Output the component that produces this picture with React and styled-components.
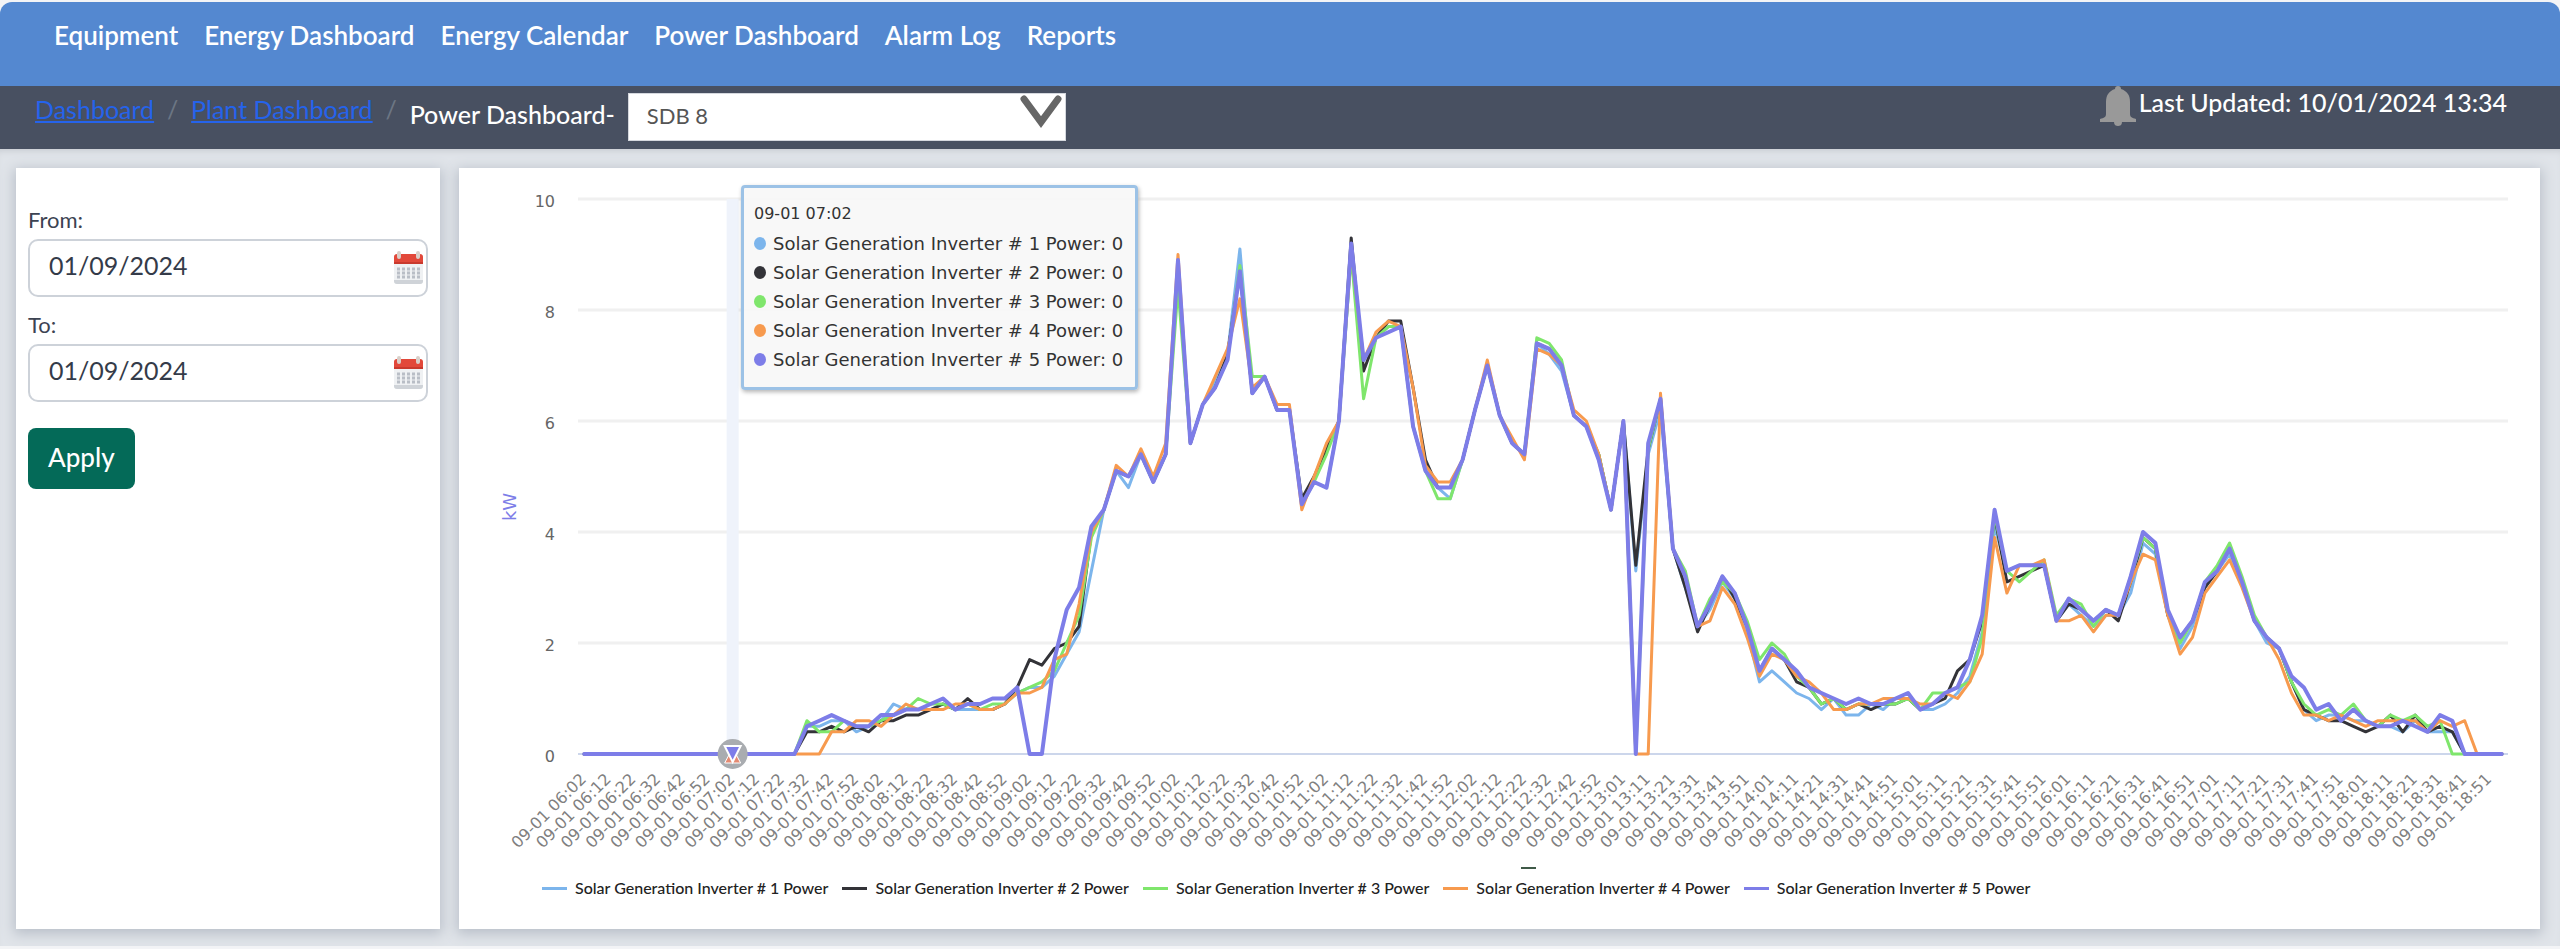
import styled, { createGlobalStyle } from 'styled-components';

const GlobalStyle = createGlobalStyle`
  *, *::before, *::after {
    box-sizing: border-box;
  }

  body {
    margin: 0;
    background-color: #f3f4f6;
    font-family: Lato, 'Liberation Sans', sans-serif;
    color: #3c4352;
  }
`;

const Page = styled.div`
  display: flex;
  flex-direction: column;
  min-height: 100vh;
  padding: 2px 0 3px;
`;

const TopNav = styled.nav`
  display: flex;
  gap: 26px;
  height: 84px;
  padding: 15px 54px;
  background-color: #5488d0;
  border-radius: 12px 12px 0 0;
`;

const TopNavLink = styled.a`
  color: #ffffff;
  font-size: 26px;
  font-weight: 600;
  line-height: 36px;
  text-decoration: none;
  white-space: nowrap;
`;

const SubBar = styled.div`
  display: flex;
  justify-content: space-between;
  height: 63px;
  padding: 0 53px 0 35px;
  background-color: #485061;
`;

const Breadcrumb = styled.div`
  display: flex;
  align-items: center;
  padding-bottom: 3px;
  font-size: 25px;
  white-space: nowrap;
`;

const CrumbLink = styled.a`
  padding-bottom: 14px;
  color: #2563eb;
`;

const CrumbDivider = styled.span`
  width: 37px;
  padding-bottom: 14px;
  color: #6c7684;
  text-align: center;
`;

const CrumbLabel = styled.label`
  margin-right: 13px;
  padding-bottom: 4px;
  color: #ffffff;
  font-weight: 500;
`;

const SelectWrapper = styled.div`
  position: relative;
  margin-top: 1px;
`;

const SourceSelect = styled.select`
  width: 438px;
  height: 48px;
  padding: 0 18px 2px;
  border: 1px solid #d5d8de;
  border-radius: 0;
  background-color: #ffffff;
  color: #555555;
  font-family: inherit;
  font-size: 22px;
  appearance: none;
`;

const SelectArrow = styled.svg`
  position: absolute;
  top: 2px;
  right: 2px;
  width: 44px;
  height: 34px;
  pointer-events: none;
`;

const Updated = styled.div`
  display: flex;
  align-items: flex-start;
  gap: 3px;
  color: #ffffff;
  font-size: 25px;
  font-weight: 500;
  line-height: 32px;
  white-space: nowrap;
`;

const BellIcon = styled.svg`
  width: 36px;
  height: 40px;
`;

const Content = styled.main`
  display: flex;
  flex: 1;
  gap: 19px;
  padding: 19px 20px 17px 16px;
  background-color: #e0e4e9;
  box-shadow: inset 0 6px 6px -4px #c8ccd2;
`;

const Card = styled.section`
  background-color: #ffffff;
  box-shadow: 0 3px 12px 2px #b9bfc9;
`;

const FilterCard = styled(Card)`
  flex: 0 0 424px;
  padding: 37px 12px;
`;

const ChartCard = styled(Card)`
  position: relative;
  flex: 1;
  min-width: 0;
`;

const Field = styled.div`
  display: flex;
  flex-direction: column;
  margin-bottom: 13px;
`;

const FieldLabel = styled.label`
  margin-bottom: 4px;
  font-size: 22px;
  line-height: 30px;
`;

const DateBox = styled.div`
  display: flex;
  align-items: center;
  height: 58px;
  padding: 0 2px 0 19px;
  border: 2px solid #cdd2d9;
  border-radius: 10px;
`;

const DateInput = styled.input`
  flex: 1;
  min-width: 0;
  padding: 0 0 6px;
  border: none;
  outline: none;
  background: transparent;
  color: #343b49;
  font-family: inherit;
  font-size: 25px;
`;

const CalendarButton = styled.button`
  display: flex;
  padding: 0;
  border: none;
  background: none;
  cursor: pointer;
`;

const ApplyButton = styled.button`
  height: 61px;
  margin-top: 13px;
  padding: 0 20px 4px;
  border: none;
  border-radius: 8px;
  background-color: #046a58;
  color: #ffffff;
  font-family: inherit;
  font-size: 26px;
  font-weight: 500;
  cursor: pointer;
`;

const ChartSvg = styled.svg`
  display: block;
  width: 100%;
  height: auto;
  font-family: 'DejaVu Sans', sans-serif;
`;

const Legend = styled.ul`
  display: flex;
  flex-wrap: wrap;
  gap: 14px;
  margin: 0;
  padding: 0 0 0 83px;
  list-style: none;
`;

const LegendItem = styled.li`
  display: flex;
  align-items: center;
  gap: 8px;
  color: #222222;
  font-size: 16px;
  font-weight: 500;
  line-height: 20px;
`;

const LegendLine = styled.span`
  width: 25px;
  height: 3px;
  background-color: ${({ $color }) => $color};
`;

const Tooltip = styled.div`
  position: absolute;
  top: 17px;
  left: 282px;
  padding: 13px 12px 13px 10px;
  border: 3px solid #9cc2e6;
  border-radius: 4px;
  background-color: rgba(247, 247, 247, 0.92);
  box-shadow: 1px 2px 4px #b5b5b5;
  color: #333333;
  font-family: 'DejaVu Sans', sans-serif;
  font-size: 18px;
  line-height: 29px;
  white-space: nowrap;
`;

const TooltipTitle = styled.div`
  margin-bottom: 2px;
  font-size: 16px;
  line-height: 26px;
`;

const TooltipRow = styled.div`
  display: flex;
  align-items: center;
  gap: 7px;
`;

const TooltipDot = styled.span`
  width: 12px;
  height: 13px;
  border-radius: 50%;
  background-color: ${({ $color }) => $color};
`;

const NAV_ITEMS = [
  'Equipment',
  'Energy Dashboard',
  'Energy Calendar',
  'Power Dashboard',
  'Alarm Log',
  'Reports',
];

const NIGHT = Array(18).fill(0);

const SERIES = [
  {
    name: 'Solar Generation Inverter # 1 Power',
    color: '#7cb5ec',
    data: [
      ...NIGHT, 0.5, 0.5, 0.6, 0.6, 0.4, 0.5, 0.6, 0.9, 0.8, 0.8, 0.8, 0.9,
      0.8, 0.8, 0.8, 0.8, 0.9, 1.1, 1.2, 1.2, 1.4, 1.8, 2.2, 3.3, 4.4, 5.1, 4.8, 5.4,
      4.9, 5.4, 8.8, 5.6, 6.3, 6.7, 7.2, 9.1, 6.5, 6.8, 6.2, 6.2, 4.5, 4.9, 4.8, 6.0,
      9.0, 7.1, 7.5, 7.7, 7.7, 5.9, 5.1, 4.8, 4.6, 5.3, 6.2, 7.0, 6.1, 5.6, 5.4, 7.4,
      7.2, 6.9, 6.1, 5.9, 5.3, 4.4, 6.0, 3.3, 5.4, 6.2, 3.7, 3.0, 2.3, 2.6, 3.1, 2.8,
      2.2, 1.3, 1.5, 1.3, 1.1, 1.0, 0.8, 1.0, 0.7, 0.7, 0.9, 0.8, 1.0, 1.0, 0.8, 0.8,
      0.9, 1.1, 1.4, 2.2, 4.1, 3.3, 3.4, 3.4, 3.4, 2.4, 2.7, 2.5, 2.3, 2.5, 2.5, 2.9,
      3.8, 3.6, 2.5, 1.9, 2.3, 3.0, 3.3, 3.6, 3.1, 2.4, 2.0, 1.9, 1.3, 0.8, 0.6, 0.7,
      0.7, 0.6, 0.6, 0.5, 0.5, 0.4, 0.6, 0.4, 0.4, 0.4, 0, 0, 0, 0,
    ],
  },
  {
    name: 'Solar Generation Inverter # 2 Power',
    color: '#333338',
    data: [
      ...NIGHT, 0.4, 0.4, 0.5, 0.4, 0.5, 0.4, 0.6, 0.6, 0.7, 0.7, 0.8, 0.9,
      0.8, 1.0, 0.8, 0.8, 0.9, 1.2, 1.7, 1.6, 1.9, 2.0, 2.3, 4.0, 4.4, 5.1, 5.0, 5.4,
      4.9, 5.4, 8.8, 5.6, 6.3, 6.6, 7.2, 8.7, 6.5, 6.8, 6.2, 6.2, 4.6, 5.0, 5.5, 6.0,
      9.3, 6.9, 7.5, 7.8, 7.8, 6.6, 5.3, 4.8, 4.8, 5.3, 6.2, 7.0, 6.1, 5.6, 5.4, 7.4,
      7.3, 7.0, 6.1, 5.9, 5.4, 4.4, 6.0, 3.4, 5.5, 6.4, 3.7, 3.0, 2.2, 2.7, 3.2, 2.8,
      2.3, 1.5, 1.9, 1.7, 1.3, 1.2, 0.9, 1.0, 0.8, 0.9, 0.8, 0.9, 0.9, 1.0, 0.8, 0.9,
      1.0, 1.5, 1.7, 2.4, 4.3, 3.1, 3.2, 3.3, 3.4, 2.4, 2.7, 2.6, 2.4, 2.6, 2.4, 3.1,
      3.9, 3.7, 2.5, 2.1, 2.4, 3.0, 3.3, 3.7, 3.1, 2.4, 2.1, 1.9, 1.3, 0.8, 0.7, 0.6,
      0.6, 0.5, 0.4, 0.5, 0.7, 0.4, 0.7, 0.4, 0.5, 0.4, 0, 0, 0, 0,
    ],
  },
  {
    name: 'Solar Generation Inverter # 3 Power',
    color: '#7fe66c',
    data: [
      ...NIGHT, 0.6, 0.4, 0.4, 0.6, 0.5, 0.5, 0.6, 0.7, 0.8, 1.0, 0.9, 0.9,
      0.8, 0.9, 0.8, 0.9, 0.9, 1.1, 1.2, 1.3, 1.5, 2.0, 2.5, 3.9, 4.4, 5.1, 5.0, 5.4,
      4.9, 5.4, 8.4, 5.6, 6.3, 6.6, 7.1, 8.8, 6.8, 6.8, 6.2, 6.2, 4.5, 4.9, 5.4, 6.0,
      9.0, 6.4, 7.5, 7.7, 7.7, 5.9, 5.1, 4.6, 4.6, 5.3, 6.2, 7.0, 6.1, 5.6, 5.4, 7.5,
      7.4, 7.1, 6.1, 5.9, 5.4, 4.4, 6.0, 0, 5.5, 6.4, 3.7, 3.3, 2.3, 2.8, 3.1, 2.9,
      2.4, 1.7, 2.0, 1.8, 1.4, 1.2, 0.9, 1.0, 0.8, 0.9, 0.9, 0.9, 0.9, 1.0, 0.8, 1.1,
      1.1, 1.2, 1.3, 2.1, 4.3, 3.3, 3.1, 3.3, 3.5, 2.5, 2.8, 2.7, 2.3, 2.6, 2.5, 3.2,
      3.9, 3.7, 2.6, 2.0, 2.4, 3.1, 3.4, 3.8, 3.2, 2.5, 2.1, 1.9, 1.3, 0.9, 0.7, 0.8,
      0.7, 0.9, 0.6, 0.5, 0.7, 0.6, 0.7, 0.5, 0.6, 0, 0, 0, 0, 0,
    ],
  },
  {
    name: 'Solar Generation Inverter # 4 Power',
    color: '#f79a4e',
    data: [
      ...NIGHT, 0, 0, 0.4, 0.4, 0.6, 0.6, 0.5, 0.7, 0.9, 0.8, 0.8, 0.8,
      0.9, 0.9, 0.8, 0.8, 0.9, 1.1, 1.1, 1.2, 1.7, 1.8, 2.7, 4.0, 4.4, 5.2, 5.0, 5.5,
      5.0, 5.6, 9.0, 5.6, 6.3, 6.8, 7.3, 8.2, 6.6, 6.8, 6.3, 6.3, 4.4, 5.0, 5.6, 6.0,
      9.1, 7.1, 7.6, 7.8, 7.7, 6.6, 5.2, 4.9, 4.9, 5.3, 6.2, 7.1, 6.1, 5.7, 5.3, 7.3,
      7.2, 7.0, 6.2, 6.0, 5.4, 4.4, 6.0, 0, 0, 6.5, 3.7, 3.2, 2.3, 2.4, 3.0, 2.7,
      2.1, 1.4, 1.8, 1.7, 1.4, 1.3, 1.1, 0.8, 0.8, 0.9, 0.9, 1.0, 1.0, 1.0, 0.9, 0.9,
      1.1, 1.0, 1.3, 1.8, 3.9, 2.9, 3.4, 3.4, 3.5, 2.4, 2.4, 2.5, 2.2, 2.5, 2.5, 3.1,
      3.6, 3.5, 2.5, 1.8, 2.1, 2.9, 3.2, 3.5, 3.0, 2.4, 2.1, 1.7, 1.1, 0.7, 0.7, 0.6,
      0.7, 0.6, 0.5, 0.6, 0.6, 0.6, 0.6, 0.4, 0.6, 0.5, 0.6, 0, 0, 0,
    ],
  },
  {
    name: 'Solar Generation Inverter # 5 Power',
    color: '#7d7de8',
    data: [
      ...NIGHT, 0.5, 0.6, 0.7, 0.6, 0.5, 0.5, 0.7, 0.7, 0.8, 0.8, 0.9, 1.0,
      0.8, 0.9, 0.9, 1.0, 1.0, 1.2, 0, 0, 1.7, 2.6, 3.0, 4.1, 4.4, 5.1, 5.0, 5.4,
      4.9, 5.4, 8.9, 5.6, 6.3, 6.6, 7.1, 8.7, 6.5, 6.8, 6.2, 6.2, 4.5, 4.9, 4.8, 6.0,
      9.2, 7.1, 7.5, 7.6, 7.7, 5.9, 5.1, 4.8, 4.8, 5.3, 6.2, 7.0, 6.1, 5.6, 5.4, 7.4,
      7.3, 7.0, 6.1, 5.9, 5.3, 4.4, 6.0, 0, 5.6, 6.4, 3.7, 3.2, 2.3, 2.7, 3.2, 2.9,
      2.3, 1.5, 1.9, 1.7, 1.5, 1.2, 1.1, 1.0, 0.9, 1.0, 0.9, 0.9, 1.0, 1.1, 0.8, 0.9,
      1.1, 1.2, 1.7, 2.5, 4.4, 3.3, 3.4, 3.4, 3.4, 2.4, 2.8, 2.6, 2.4, 2.6, 2.5, 3.2,
      4.0, 3.8, 2.6, 2.1, 2.4, 3.1, 3.3, 3.7, 3.1, 2.4, 2.1, 1.9, 1.4, 1.2, 0.8, 0.9,
      0.6, 0.8, 0.6, 0.5, 0.5, 0.6, 0.5, 0.4, 0.7, 0.6, 0, 0, 0, 0,
    ],
  },
];

const POINTS = 156;
const HOVERED = 12;
const CHART = { width: 2081, height: 710, left: 119, right: 2049, top: 31, bottom: 586 };
const STEP = (CHART.right - CHART.left) / POINTS;

const xAt = (index) => CHART.left + (index + 0.5) * STEP;
const yAt = (value) => CHART.bottom - (value / 10) * (CHART.bottom - CHART.top);

function timeLabels() {
  const labels = [];
  for (let i = 0; i < POINTS / 2; i += 1) {
    const minutes = 362 + i * 10 - (i >= 42 ? 1 : 0);
    const hh = String(Math.floor(minutes / 60)).padStart(2, '0');
    const mm = String(minutes % 60).padStart(2, '0');
    labels.push(`09-01 ${hh}:${mm}`);
  }
  return labels;
}

function toPoints(data) {
  return data.map((value, i) => `${xAt(i).toFixed(1)},${yAt(value).toFixed(1)}`).join(' ');
}

function HoverMarker() {
  const x = xAt(HOVERED);
  const y = yAt(0);
  return (
    <g transform={`translate(${x} ${y})`}>
      <circle r="15" fill="#a9acb0" />
      <path d="M-8 9 L0 -6 L8 9 Z" fill="#e58a72" stroke="#ffffff" strokeWidth="1" />
      <path d="M-8 -8 H8 L0 8 Z" fill="#7d7de8" stroke="#ffffff" strokeWidth="2" />
    </g>
  );
}

function PowerChart() {
  return (
    <ChartSvg viewBox={`0 0 ${CHART.width} ${CHART.height}`} role="img" aria-label="Inverter power in kW">
      {[2, 4, 6, 8, 10].map((tick) => (
        <path key={tick} d={`M${CHART.left} ${yAt(tick)}H${CHART.right}`} stroke="#f0f0f0" strokeWidth="3" />
      ))}
      <rect x={xAt(HOVERED) - 6} y={CHART.top} width="12" height={CHART.bottom - CHART.top} fill="#eff3fb" />
      <path d={`M${CHART.left} ${CHART.bottom}H${CHART.right}`} stroke="#ccd6eb" strokeWidth="2" />
      {[0, 2, 4, 6, 8, 10].map((tick) => (
        <text key={tick} x="96" y={yAt(tick) + 8} textAnchor="end" fontSize="16" fill="#666666">
          {tick}
        </text>
      ))}
      <text transform="translate(57 339) rotate(-90)" textAnchor="middle" fontSize="18" fill="#7d7de8">
        kW
      </text>
      {SERIES.map((series, i) => (
        <polyline
          key={series.name}
          points={toPoints(series.data)}
          fill="none"
          stroke={series.color}
          strokeWidth={i === 4 ? 4 : 3}
          strokeLinejoin="round"
          strokeLinecap="round"
        />
      ))}
      <HoverMarker />
      {timeLabels().map((label, i) => (
        <text
          key={label}
          transform={`translate(${xAt(i * 2) + 3} ${CHART.bottom + 26}) rotate(-45)`}
          textAnchor="end"
          fontSize="16"
          fill="#808080"
        >
          {label}
        </text>
      ))}
      <path d="M1062 700h15" stroke="#3f5a48" strokeWidth="2" />
    </ChartSvg>
  );
}

function ChartTooltip() {
  return (
    <Tooltip role="tooltip">
      <TooltipTitle>09-01 07:02</TooltipTitle>
      {SERIES.map((series) => (
        <TooltipRow key={series.name}>
          <TooltipDot $color={series.color} />
          {`${series.name}: 0`}
        </TooltipRow>
      ))}
    </Tooltip>
  );
}

function CalendarIcon() {
  return (
    <svg width="31" height="34" viewBox="0 0 31 34" aria-hidden="true">
      <rect x="1" y="3" width="29" height="30" rx="3" fill="#eff1f3" />
      <path d="M1 30v-1h29v1a3 3 0 0 1-3 3H4a3 3 0 0 1-3-3z" fill="#cfd3d8" />
      <path d="M1 13V6a3 3 0 0 1 3-3h23a3 3 0 0 1 3 3v7z" fill="#e2483a" />
      <path d="M1 11h29v2H1z" fill="#c93a2e" />
      <path
        d="M4 18h23M4 22h23M4 26h23"
        stroke="#b9bec6"
        strokeWidth="3"
        strokeDasharray="3 2"
      />
      <path d="M6 2v4M25 2v4" stroke="#d9cfc9" strokeWidth="4" strokeLinecap="round" />
    </svg>
  );
}

function DateField({ id, label }) {
  return (
    <Field>
      <FieldLabel htmlFor={id}>{label}</FieldLabel>
      <DateBox>
        <DateInput id={id} type="text" defaultValue="01/09/2024" />
        <CalendarButton type="button" aria-label={`Pick date, ${label}`}>
          <CalendarIcon />
        </CalendarButton>
      </DateBox>
    </Field>
  );
}

function SubHeader() {
  return (
    <SubBar>
      <Breadcrumb>
        <CrumbLink href="#dashboard">Dashboard</CrumbLink>
        <CrumbDivider>/</CrumbDivider>
        <CrumbLink href="#plant">Plant Dashboard</CrumbLink>
        <CrumbDivider>/</CrumbDivider>
        <CrumbLabel htmlFor="source">Power Dashboard-</CrumbLabel>
        <SelectWrapper>
          <SourceSelect id="source" defaultValue="SDB 8">
            <option>SDB 8</option>
          </SourceSelect>
          <SelectArrow viewBox="0 0 44 34" aria-hidden="true">
            <path
              d="M4 4 L21 27 L38 4"
              fill="none"
              stroke="#666666"
              strokeWidth="7"
              strokeLinecap="round"
            />
          </SelectArrow>
        </SelectWrapper>
      </Breadcrumb>
      <Updated>
        <BellIcon viewBox="0 0 36 40" aria-hidden="true">
          <path
            d="M18 0c2 0 3 1 3 3 6 2 9 6 9 13v12c0 3 2 4 6 5v3H22c0 3-2 4-4 4s-4-1-4-4H0v-3c4-1 6-2 6-5V16C6 9 9 5 15 3c0-2 1-3 3-3z"
            fill="#999999"
          />
        </BellIcon>
        Last Updated: 10/01/2024 13:34
      </Updated>
    </SubBar>
  );
}

function App() {
  return (
    <Page>
      <GlobalStyle />
      <TopNav>
        {NAV_ITEMS.map((item) => (
          <TopNavLink key={item} href="#">
            {item}
          </TopNavLink>
        ))}
      </TopNav>
      <SubHeader />
      <Content>
        <FilterCard>
          <DateField id="from" label="From:" />
          <DateField id="to" label="To:" />
          <ApplyButton type="button">Apply</ApplyButton>
        </FilterCard>
        <ChartCard>
          <PowerChart />
          <Legend>
            {SERIES.map((series) => (
              <LegendItem key={series.name}>
                <LegendLine $color={series.color} />
                {series.name}
              </LegendItem>
            ))}
          </Legend>
          <ChartTooltip />
        </ChartCard>
      </Content>
    </Page>
  );
}

export default App;
